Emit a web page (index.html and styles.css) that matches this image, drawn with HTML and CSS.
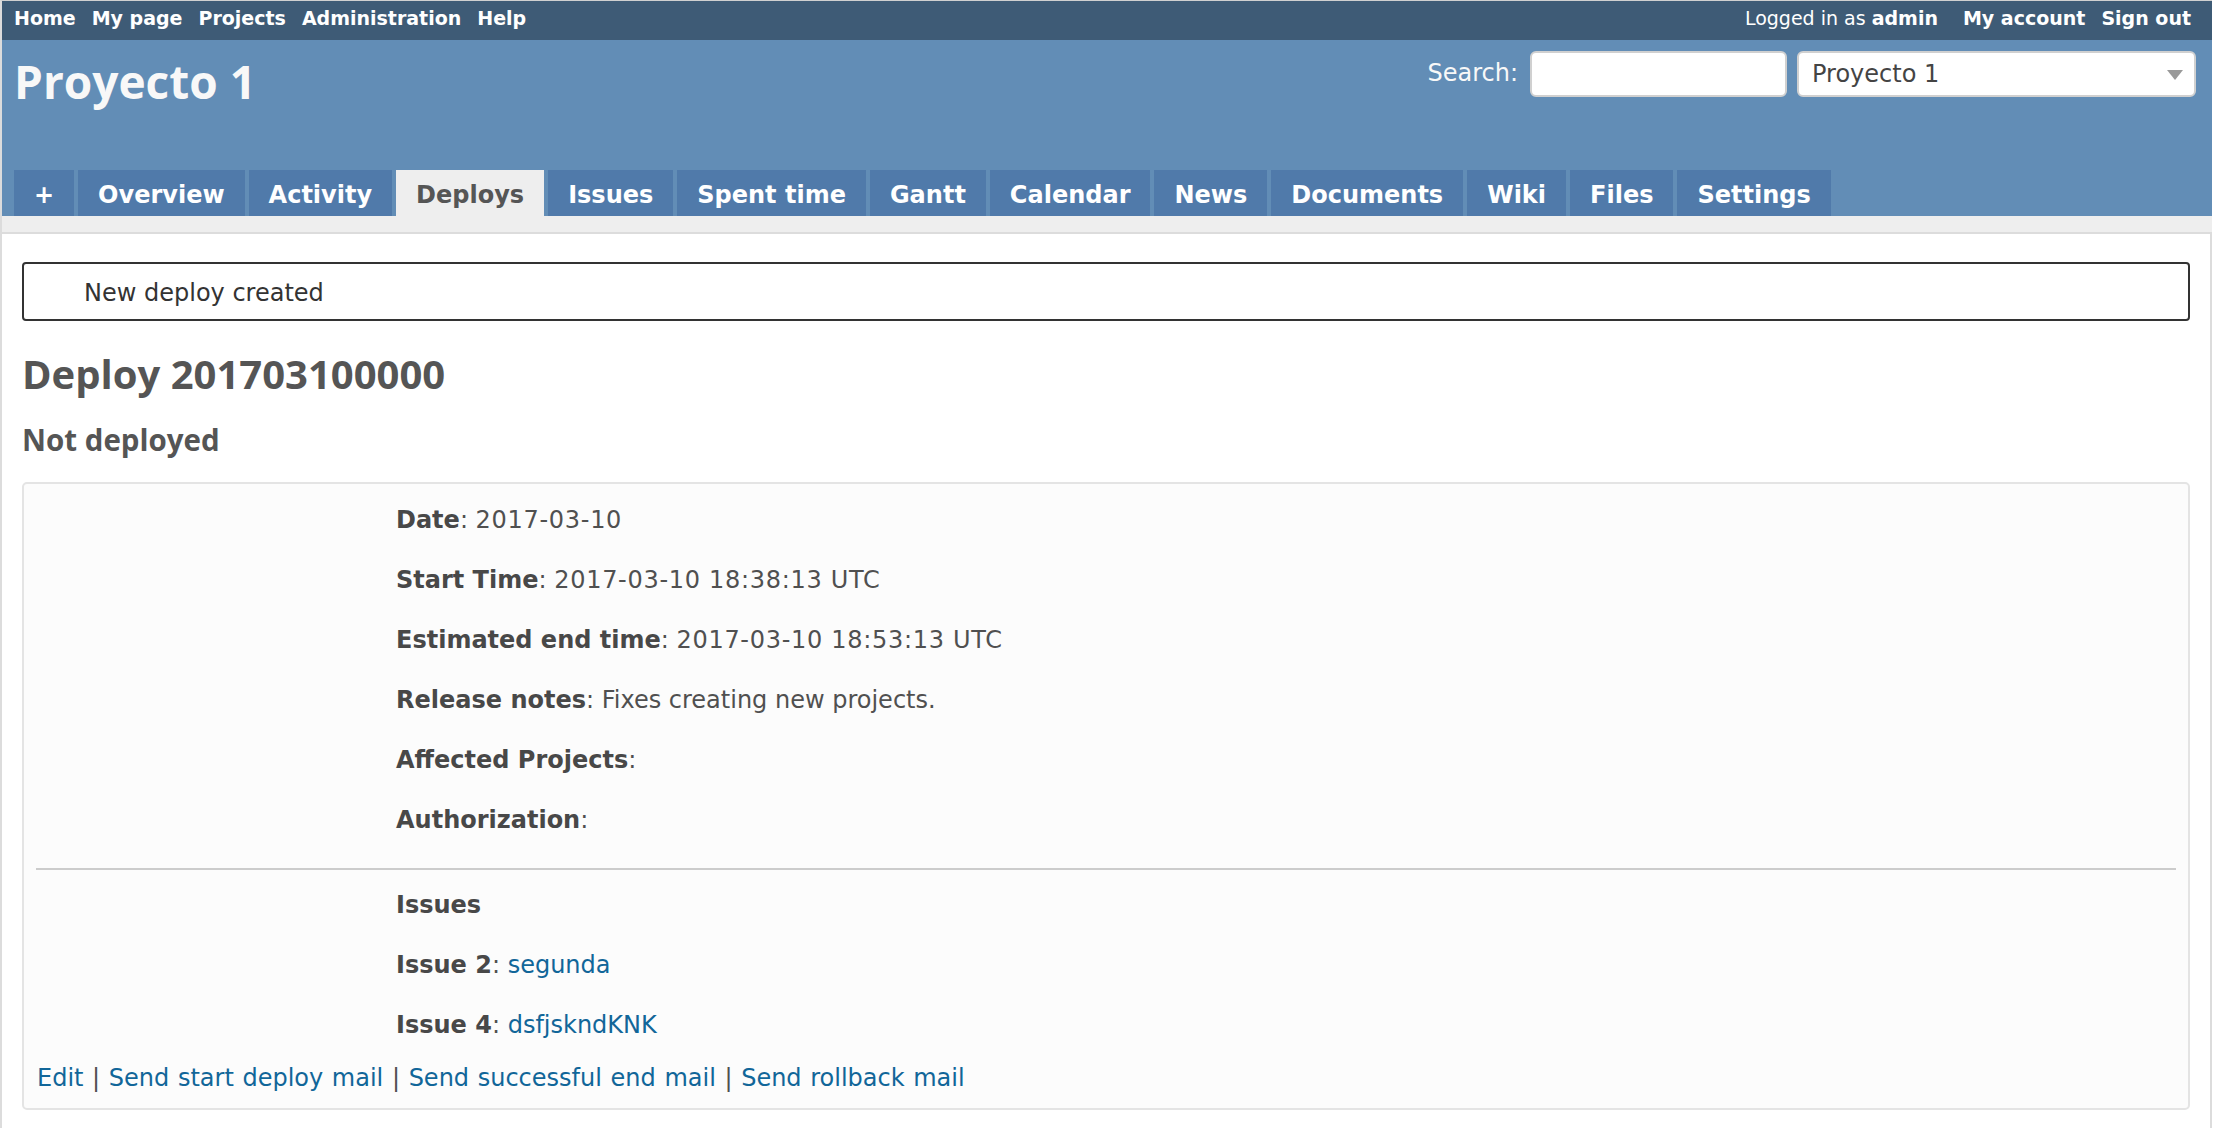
FILE: index.html
```html
<!DOCTYPE html>
<html lang="en">
<head>
<meta charset="utf-8">
<title>Proyecto 1 - Deploy 201703100000</title>
<link rel="stylesheet" href="styles.css">
</head>
<body>
<div class="page">
  <div class="top-menu">
    <ul class="menu-left">
      <li><a href="#">Home</a></li>
      <li><a href="#">My page</a></li>
      <li><a href="#">Projects</a></li>
      <li><a href="#">Administration</a></li>
      <li><a href="#">Help</a></li>
    </ul>
    <div class="menu-right">
      <span class="loggedas">Logged in as <a href="#">admin</a></span>
      <a href="#">My account</a>
      <a href="#">Sign out</a>
    </div>
  </div>
  <div class="header">
    <div class="header-top">
      <h1 class="title">Proyecto 1</h1>
      <div class="quick-search">
        <label class="search-label">Search:</label>
        <input class="search-input" type="text">
        <div class="jump-select">
          <span>Proyecto 1</span>
          <svg class="arrow" width="16" height="10" viewBox="0 0 16 10"><path d="M0 0 H16 L8 10 Z" fill="#999"/></svg>
        </div>
      </div>
    </div>
    <ul class="main-menu">
      <li><a href="#" class="tab">+</a></li>
      <li><a href="#" class="tab">Overview</a></li>
      <li><a href="#" class="tab">Activity</a></li>
      <li><a href="#" class="tab selected">Deploys</a></li>
      <li><a href="#" class="tab">Issues</a></li>
      <li><a href="#" class="tab">Spent time</a></li>
      <li><a href="#" class="tab">Gantt</a></li>
      <li><a href="#" class="tab">Calendar</a></li>
      <li><a href="#" class="tab">News</a></li>
      <li><a href="#" class="tab">Documents</a></li>
      <li><a href="#" class="tab">Wiki</a></li>
      <li><a href="#" class="tab">Files</a></li>
      <li><a href="#" class="tab">Settings</a></li>
    </ul>
  </div>
  <div class="main">
    <div class="content">
      <div class="flash">New deploy created</div>
      <h2 class="deploy-title">Deploy 201703100000</h2>
      <h3 class="deploy-status">Not deployed</h3>
      <div class="box">
        <p class="field"><strong>Date</strong>: <span class="val">2017-03-10</span></p>
        <p class="field"><strong>Start Time</strong>: <span class="val">2017-03-10 18:38:13 UTC</span></p>
        <p class="field"><strong>Estimated end time</strong>: <span class="val">2017-03-10 18:53:13 UTC</span></p>
        <p class="field"><strong>Release notes</strong>: Fixes creating new projects.</p>
        <p class="field"><strong>Affected Projects</strong>:</p>
        <p class="field"><strong>Authorization</strong>:</p>
        <hr class="sep">
        <p class="field"><strong>Issues</strong></p>
        <p class="field"><strong>Issue 2</strong>: <a href="#">segunda</a></p>
        <p class="field"><strong>Issue 4</strong>: <a href="#">dsfjskndKNK</a></p>
        <p class="actions"><a href="#">Edit</a> | <a href="#">Send start deploy mail</a> | <a href="#">Send successful end mail</a> | <a href="#">Send rollback mail</a></p>
      </div>
    </div>
  </div>
</div>
</body>
</html>
```

FILE: styles.css
```css
html, body {
  margin: 0;
  padding: 0;
  background: #fff;
}

body {
  font-family: "DejaVu Sans", Verdana, sans-serif;
  font-size: 24px;
  color: #333;
}

a {
  color: #169;
  text-decoration: none;
}

.page {
  width: 2210px;
  border-left: 2px solid #dcdcdc;
  border-top: 1px solid #d0d0d0;
  background: #eee;
}

/* top menu */
.top-menu {
  height: 39px;
  box-sizing: border-box;
  background: #3E5B76;
  color: #fff;
  font-size: 19px;
  display: flex;
  align-items: center;
  justify-content: space-between;
  padding: 0 5px 5px 12px;
}

.menu-left {
  display: flex;
  margin: 0;
  padding: 0;
  list-style: none;
}

.top-menu a {
  color: #fff;
  font-weight: bold;
  margin-right: 16px;
}

.menu-right {
  display: flex;
}

.loggedas {
  margin-right: 9px;
}

.loggedas a {
  margin-right: 16px;
}

/* header */
.header {
  height: 176px;
  box-sizing: border-box;
  background: #628DB6;
  color: #f8f8f8;
  padding: 10px 16px 0 12px;
  display: flex;
  flex-direction: column;
}

.header-top {
  display: flex;
  justify-content: space-between;
  align-items: flex-start;
}

.title {
  margin: 3px 0 0 0;
  font-family: "Open Sans", sans-serif;
  font-weight: bold;
  font-size: 46px;
  line-height: 56px;
  color: #f8f8f8;
  padding: 0;
}

.quick-search {
  display: flex;
  align-items: center;
  margin-top: 1px;
}

.search-label {
  color: #f8f8f8;
  font-size: 24px;
  margin-right: 12px;
  padding-bottom: 3px;
}

.search-input {
  width: 257px;
  height: 46px;
  box-sizing: border-box;
  border: 2px solid #d0d0d0;
  border-radius: 6px;
  background: #fff;
  margin: 0 10px 0 0;
  padding: 0;
}

.jump-select {
  width: 399px;
  height: 46px;
  box-sizing: border-box;
  border: 2px solid #d0d0d0;
  border-radius: 6px;
  background: #fff;
  color: #444;
  display: flex;
  align-items: center;
  justify-content: space-between;
  padding: 0 11px 0 13px;
  font-size: 24px;
}

.arrow {
  display: block;
  margin-top: 2px;
}

.main-menu {
  margin: auto 0 0 0;
  padding: 0;
  list-style: none;
  display: flex;
  gap: 4px;
}

.tab {
  display: block;
  height: 46px;
  box-sizing: border-box;
  line-height: 46px;
  padding: 2px 20px 0 20px;
  background: #507AAA;
  color: #fff;
  font-weight: bold;
  font-size: 24px;
}

.tab.selected {
  background: #eee;
  color: #555;
}

/* main */
.main {
  padding-top: 16px;
  background: #eee;
}

.content {
  background: #fff;
  border-top: 2px solid #dcdcdc;
  border-right: 2px solid #dcdcdc;
  padding: 28px 20px 20px 20px;
}

.flash {
  border: 2px solid #333;
  border-radius: 4px;
  padding: 11px 8px 8px 60px;
  line-height: 36px;
  color: #333;
}

.deploy-title {
  font-family: "Open Sans", sans-serif;
  font-weight: bold;
  font-size: 40px;
  line-height: 48px;
  color: #555;
  margin: 29px 0 0 0;
}

.deploy-status {
  font-family: "Open Sans", sans-serif;
  font-weight: bold;
  font-size: 29.5px;
  line-height: 36px;
  color: #555;
  margin: 24px 0 0 0;
}

.box {
  margin-top: 24px;
  border: 2px solid #e4e4e4;
  border-radius: 5px;
  background: #fcfcfc;
  color: #505050;
  padding: 6px 12px 12px 12px;
}

.field {
  margin: 0;
  padding: 12px 0 12px 360px;
  line-height: 36px;
}

.field strong {
  color: #484848;
}

.val {
  letter-spacing: 0.7px;
}

.sep {
  border: 0;
  height: 2px;
  background: #ccc;
  margin: 18px 0 5px 0;
}

.actions {
  margin: 5px 0 0 1px;
  line-height: 36px;
  word-spacing: 1px;
}
```
